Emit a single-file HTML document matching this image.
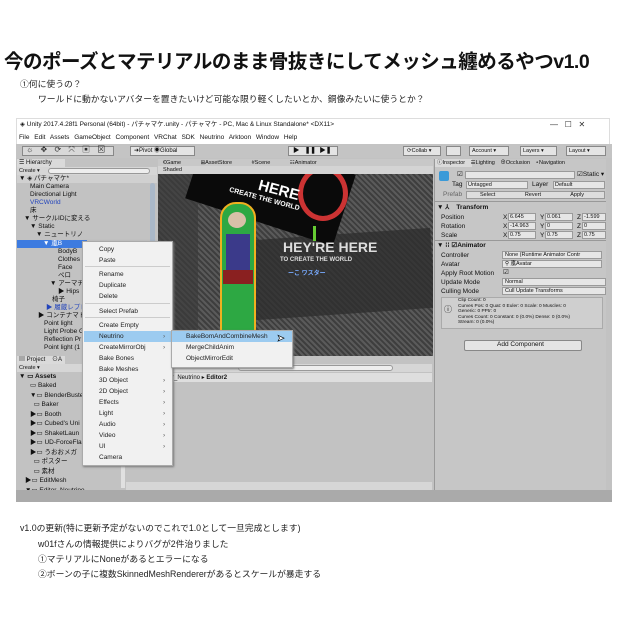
<!DOCTYPE html>
<html><head><meta charset="utf-8"><style>
*{margin:0;padding:0;box-sizing:border-box}
body{width:620px;height:620px;background:#fff;position:relative;overflow:hidden;font-family:"Liberation Sans","Noto Sans CJK JP",sans-serif;color:#222}
.a{position:absolute;white-space:nowrap}
.s{font-size:6.5px;line-height:8px;color:#111}
.m{font-size:6.5px;line-height:11px;color:#222;position:absolute;left:16px}
.f{position:absolute;background:#e6e6e6;border:1px solid #9a9a9a;height:8px}
</style></head><body>
<div class="a" style="left:4px;top:45px;font-size:19.5px;font-weight:bold;letter-spacing:-0.5px;color:#111">今のポーズとマテリアルのまま骨抜きにしてメッシュ纏めるやつv1.0</div>
<div class="a" style="left:20px;top:77px;font-size:8.8px">①何に使うの？</div>
<div class="a" style="left:38px;top:92px;font-size:8.8px">ワールドに動かないアバターを置きたいけど可能な限り軽くしたいとか、銅像みたいに使うとか？</div>

<!-- window -->
<div class="a" style="left:16px;top:118px;width:594px;height:384px;background:#fff;border:1px solid #ddd"></div>
<div class="a s" style="left:20px;top:121px">◈ Unity 2017.4.28f1 Personal (64bit) - パチャマケ.unity - パチャマケ - PC, Mac &amp; Linux Standalone* &lt;DX11&gt;</div>
<div class="a" style="left:550px;top:120px;font-size:8px;color:#333">—&nbsp;&nbsp;&nbsp;☐&nbsp;&nbsp;&nbsp;✕</div>
<div class="a s" style="left:19px;top:134px;word-spacing:3px">File Edit Assets GameObject Component VRChat SDK Neutrino Arktoon Window Help</div>
<!-- toolbar -->
<div class="a" style="left:16px;top:144px;width:596px;height:14px;background:#c4c4c4"></div>
<div class="a" style="left:22px;top:146px;width:92px;height:10px;background:#d8d8d8;border:1px solid #888"></div>
<div class="a s" style="left:26px;top:146px;font-size:8px;word-spacing:5px;color:#333">☼ ✥ ⟳ ⤧ ▣ ⊠</div>
<div class="a" style="left:130px;top:146px;width:65px;height:10px;background:#e4e4e4;border:1px solid #888"></div>
<div class="a s" style="left:134px;top:147px;font-size:6px">➜Pivot ◉Global</div>
<div class="a" style="left:288px;top:146px;width:50px;height:10px;background:#e4e4e4;border:1px solid #888"></div>
<div class="a s" style="left:293px;top:147px;font-size:6.5px;font-weight:bold">▶ &nbsp; ❚❚ &nbsp;▶❚</div>
<div class="a" style="left:403px;top:146px;width:38px;height:10px;background:#e4e4e4;border:1px solid #888"></div>
<div class="a" style="left:446px;top:146px;width:15px;height:10px;background:#e4e4e4;border:1px solid #888"></div>
<div class="a" style="left:469px;top:146px;width:40px;height:10px;background:#e4e4e4;border:1px solid #888"></div>
<div class="a" style="left:520px;top:146px;width:37px;height:10px;background:#e4e4e4;border:1px solid #888"></div>
<div class="a" style="left:566px;top:146px;width:40px;height:10px;background:#e4e4e4;border:1px solid #888"></div>
<div class="a s" style="left:407px;top:147px;font-size:5.5px">⟳Collab ▾</div>
<div class="a s" style="left:472px;top:147px;font-size:5.5px">Account ▾</div>
<div class="a s" style="left:523px;top:147px;font-size:5.5px">Layers ▾</div>
<div class="a s" style="left:569px;top:147px;font-size:5.5px">Layout ▾</div>

<!-- main gray -->
<div class="a" style="left:16px;top:158px;width:596px;height:344px;background:#c2c2c2"></div>
<!-- hierarchy -->
<div class="a" style="left:17px;top:159px;width:48px;height:8px;background:#dadada"></div>
<div class="a s" style="left:19px;top:159px;font-size:6px">☰ Hierarchy</div>
<div class="a" style="left:17px;top:167px;width:140px;height:8px;background:#d6d6d6"></div>
<div class="a s" style="left:19px;top:167px;font-size:5.5px">Create ▾</div>
<div class="a" style="left:48px;top:168px;width:102px;height:6px;background:#eee;border-radius:3px;border:1px solid #999"></div>
<div class="a" style="left:17px;top:175px;width:140px;height:8px;background:#d0d0d0"></div>
<div class="a s" style="left:19px;top:175px">▼ ◈ パチャマケ*</div>
<div class="a" style="left:150px;top:183px;width:5px;height:130px;background:#aab8c8;border-radius:3px"></div>
<div class="a s" style="left:30px;top:183px;line-height:8px">Main Camera<br>Directional Light<br><span style="color:#2244bb">VRCWorld</span><br>床</div>
<div class="a s" style="left:24px;top:215px">▼ サークルIDに変える</div>
<div class="a s" style="left:30px;top:223px">▼ Static</div>
<div class="a s" style="left:36px;top:231px">▼ ニュートリノ</div>
<div class="a" style="left:17px;top:240px;width:70px;height:8px;background:#3d7be0"></div>
<div class="a s" style="left:43px;top:240px;color:#fff">▼ 颪B</div>
<div class="a s" style="left:58px;top:248px;line-height:8px">BodyB<br>Clothes<br>Face<br>ペロ</div>
<div class="a s" style="left:50px;top:280px">▼ アーマチ</div>
<div class="a s" style="left:58px;top:288px">▶ Hips</div>
<div class="a s" style="left:52px;top:296px">椅子</div>
<div class="a s" style="left:46px;top:304px;color:#2244bb">▶ 履蔵レプレ</div>
<div class="a s" style="left:38px;top:312px">▶ コンテナマト</div>
<div class="a s" style="left:44px;top:320px;line-height:8px">Point light<br>Light Probe G<br>Reflection Pr<br>Point light (1</div>

<!-- project -->
<div class="a" style="left:17px;top:356px;width:48px;height:8px;background:#dadada"></div>
<div class="a s" style="left:19px;top:356px;font-size:6px">▤ Project &nbsp;&nbsp; ⊙A</div>
<div class="a" style="left:17px;top:364px;width:415px;height:8px;background:#d6d6d6"></div>
<div class="a s" style="left:19px;top:364px;font-size:5.5px">Create ▾</div>
<div class="a" style="left:238px;top:365px;width:155px;height:6px;background:#eee;border-radius:3px;border:1px solid #999"></div>
<div class="a s" style="left:19px;top:373px;font-weight:bold">▼ ▭ Assets</div>
<div class="a s" style="left:30px;top:381px;line-height:9.5px">▭ Baked<br>▼▭ BlenderBuster<br>&nbsp;&nbsp;▭ Baker<br>▶▭ Booth<br>▶▭ Cubed's Uni<br>▶▭ ShaketLaun<br>▶▭ UD-ForceFla<br>▶▭ うおおメガ<br>&nbsp;&nbsp;▭ ポスター<br>&nbsp;&nbsp;▭ 素材</div>
<div class="a s" style="left:25px;top:476px;line-height:9.5px">▶▭ EditMesh<br>▼▭ Editor_Neutrino<br>&nbsp;&nbsp;&nbsp;&nbsp;▭ Editor</div>
<div class="a" style="left:121px;top:373px;width:4px;height:115px;background:#e0e0e0"></div>
<div class="a" style="left:126px;top:373px;width:306px;height:9px;background:#dedede"></div>
<div class="a s" style="left:172px;top:374px;font-size:6px">r_Neutrino ▸ <b>Editor2</b></div>
<div class="a" style="left:126px;top:482px;width:306px;height:8px;background:#d6d6d6"></div>
<div class="a" style="left:16px;top:490px;width:596px;height:12px;background:#aaa"></div>

<!-- scene -->
<div class="a" style="left:158px;top:159px;width:275px;height:7px;background:#c8c8c8"></div>
<div class="a s" style="left:163px;top:159px;font-size:5.5px;word-spacing:18px">€Game ⊞AssetStore #Scene ☷Animator</div>
<div class="a" style="left:158px;top:166px;width:275px;height:8px;background:#d4d4d4"></div>
<div class="a s" style="left:163px;top:166px;font-size:5.5px">Shaded</div>
<div class="a" style="left:158px;top:174px;width:275px;height:182px;background:#474747;overflow:hidden">
  <div class="a" style="left:0;top:0;width:275px;height:182px;background:repeating-linear-gradient(45deg,#3e3e3e 0 2px,#5a5a5a 2px 4px)"></div>
  <div class="a" style="left:0;top:0;width:40px;height:182px;background:#3a3a3a;opacity:.7"></div>
  <div class="a" style="left:95px;top:60px;width:180px;height:80px;background:#2e2e2e;opacity:.8;transform:rotate(-4deg)"></div>
  <div class="a" style="left:35px;top:-25px;width:155px;height:75px;background:#0a0a0a;transform:rotate(18deg)"></div>
  <div class="a" style="left:140px;top:-8px;width:50px;height:55px;border-radius:50%;border:5px solid #c33;"></div>
  <div class="a" style="left:100px;top:8px;color:#fff;font-weight:bold;font-size:15px;transform:rotate(15deg)">HERE</div>
  <div class="a" style="left:70px;top:22px;color:#fff;font-weight:bold;font-size:7px;transform:rotate(15deg)">CREATE THE WORLD</div>
  <div class="a" style="left:125px;top:65px;color:#ddd;font-weight:bold;font-size:14px">HEY'RE HERE</div>
  <div class="a" style="left:122px;top:83px;color:#ddd;font-weight:bold;font-size:6px">TO CREATE THE WORLD</div>
  <div class="a" style="left:130px;top:94px;color:#7af;font-weight:bold;font-size:6px">ーこ ワスター</div>
  <div class="a" style="left:62px;top:28px;width:36px;height:154px;border-radius:16px 16px 4px 4px;background:#2da843;border:2px solid #f0b020"></div>
  <div class="a" style="left:68px;top:60px;width:24px;height:40px;background:#3b3a8a"></div>
  <div class="a" style="left:65px;top:96px;width:30px;height:14px;background:#8a2020"></div>
  <div class="a" style="left:70px;top:38px;width:18px;height:16px;background:#d8c0a8;border-radius:50%"></div>
  <div class="a" style="left:155px;top:52px;width:3px;height:15px;background:#6c3"></div>
</div>

<!-- inspector -->
<div class="a" style="left:434px;top:159px;width:172px;height:331px;background:#c6c6c6;border-left:1px solid #999"></div>
<div class="a" style="left:435px;top:159px;width:37px;height:8px;background:#dadada"></div>
<div class="a s" style="left:437px;top:159px;font-size:5.5px;word-spacing:4px">ⓘInspector ☰Lighting ⊕Occlusion ∘Navigation</div>
<div class="a" style="left:439px;top:171px;width:10px;height:10px;background:#3a9ad8;border-radius:2px"></div>
<div class="a s" style="left:457px;top:171px">☑ 颪B</div>
<div class="f" style="left:465px;top:171px;width:110px"></div>
<div class="a s" style="left:577px;top:171px">☑Static ▾</div>
<div class="a s" style="left:452px;top:181px">Tag</div><div class="f" style="left:466px;top:181px;width:62px"></div>
<div class="a s" style="left:532px;top:181px">Layer</div><div class="f" style="left:553px;top:181px;width:52px"></div>
<div class="a s" style="left:468px;top:181px;font-size:5.5px">Untagged</div><div class="a s" style="left:555px;top:181px;font-size:5.5px">Default</div>
<div class="a s" style="left:443px;top:191px;color:#666">Prefab</div>
<div class="f" style="left:466px;top:191px;width:139px;background:#ddd"></div>
<div class="a s" style="left:480px;top:191px;font-size:5.5px;word-spacing:28px">Select Revert Apply</div>
<div class="a" style="left:434px;top:201px;width:172px;height:1px;background:#999"></div>
<div class="a s" style="left:437px;top:204px;font-weight:bold">▼ ⅄ &nbsp;&nbsp; Transform</div>
<div class="a s" style="left:441px;top:213px;line-height:9px">Position<br>Rotation<br>Scale</div>
<div class="a s" style="left:503px;top:213px;line-height:9px">X<br>X<br>X</div>
<div class="a s" style="left:540px;top:213px;line-height:9px">Y<br>Y<br>Y</div>
<div class="a s" style="left:577px;top:213px;line-height:9px">Z<br>Z<br>Z</div>
<div class="f" style="left:508px;top:213px;width:28px"></div><div class="f" style="left:545px;top:213px;width:28px"></div><div class="f" style="left:582px;top:213px;width:24px"></div>
<div class="f" style="left:508px;top:222px;width:28px"></div><div class="f" style="left:545px;top:222px;width:28px"></div><div class="f" style="left:582px;top:222px;width:24px"></div>
<div class="f" style="left:508px;top:231px;width:28px"></div><div class="f" style="left:545px;top:231px;width:28px"></div><div class="f" style="left:582px;top:231px;width:24px"></div>
<div class="a s" style="left:510px;top:213px;line-height:9px;font-size:5.5px">6.645<br>-14.963<br>0.75</div>
<div class="a s" style="left:547px;top:213px;line-height:9px;font-size:5.5px">0.061<br>0<br>0.75</div>
<div class="a s" style="left:584px;top:213px;line-height:9px;font-size:5.5px">-1.599<br>0<br>0.75</div>
<div class="a" style="left:434px;top:240px;width:172px;height:1px;background:#999"></div>
<div class="a s" style="left:437px;top:242px;font-weight:bold">▼ ⁞⁞ ☑Animator</div>
<div class="a s" style="left:441px;top:251px;line-height:9px">Controller<br>Avatar<br>Apply Root Motion<br>Update Mode<br>Culling Mode</div>
<div class="f" style="left:502px;top:251px;width:100px"></div>
<div class="f" style="left:502px;top:260px;width:100px"></div>
<div class="a s" style="left:503px;top:269px">☑</div>
<div class="f" style="left:502px;top:278px;width:104px"></div>
<div class="f" style="left:502px;top:287px;width:104px"></div>
<div class="a s" style="left:505px;top:251px;line-height:9px;font-size:5.5px">None (Runtime Animator Contr<br>⚲ 颪Avatar</div>
<div class="a s" style="left:505px;top:278px;line-height:9px;font-size:5.5px">Normal<br>Cull Update Transforms</div>
<div class="a" style="left:441px;top:297px;width:162px;height:32px;background:#cfcfcf;border:1px solid #aaa"></div>
<div class="a s" style="left:458px;top:298px;font-size:4.8px;line-height:5.5px">Clip Count: 0<br>Curves Pos: 0 Quat: 0 Euler: 0 Scale: 0 Muscles: 0<br>Generic: 0 PPtr: 0<br>Curves Count: 0 Constant: 0 (0.0%) Dense: 0 (0.0%)<br>Stream: 0 (0.0%)</div>
<div class="a s" style="left:444px;top:306px;font-size:8px">ⓘ</div>
<div class="a" style="left:464px;top:340px;width:118px;height:11px;background:#e4e4e4;border:1px solid #888;border-radius:2px"></div>
<div class="a s" style="left:497px;top:341px;font-size:6.5px">Add Component</div>

<!-- context menu -->
<div class="a" style="left:82px;top:241px;width:91px;height:225px;background:#f1f1f1;border:1px solid #aaa;box-shadow:1px 1px 2px #777"></div>
<div class="a" style="left:84px;top:331px;width:87px;height:11px;background:#9ccbf0"></div>
<div class="m" style="left:99px;top:244px">Copy</div>
<div class="m" style="left:99px;top:255px">Paste</div>
<div class="m" style="left:99px;top:269px">Rename</div>
<div class="m" style="left:99px;top:280px">Duplicate</div>
<div class="m" style="left:99px;top:291px">Delete</div>
<div class="m" style="left:99px;top:306px">Select Prefab</div>
<div class="m" style="left:99px;top:320px">Create Empty</div>
<div class="m" style="left:99px;top:331px">Neutrino</div>
<div class="m" style="left:99px;top:342px">CreateMirrorObj</div>
<div class="m" style="left:99px;top:353px">Bake Bones</div>
<div class="m" style="left:99px;top:364px">Bake Meshes</div>
<div class="m" style="left:99px;top:375px">3D Object</div>
<div class="m" style="left:99px;top:386px">2D Object</div>
<div class="m" style="left:99px;top:397px">Effects</div>
<div class="m" style="left:99px;top:408px">Light</div>
<div class="m" style="left:99px;top:419px">Audio</div>
<div class="m" style="left:99px;top:430px">Video</div>
<div class="m" style="left:99px;top:441px">UI</div>
<div class="m" style="left:99px;top:452px">Camera</div>
<div class="a s" style="left:163px;top:331px;line-height:11px;color:#555">›<br>›<br><br><br>›<br>›<br>›<br>›<br>›<br>›<br>›</div>
<div class="a" style="left:85px;top:266px;width:85px;height:1px;background:#ccc"></div>
<div class="a" style="left:85px;top:303px;width:85px;height:1px;background:#ccc"></div>
<div class="a" style="left:85px;top:317px;width:85px;height:1px;background:#ccc"></div>
<!-- submenu -->
<div class="a" style="left:171px;top:330px;width:122px;height:38px;background:#f1f1f1;border:1px solid #aaa;box-shadow:1px 1px 2px #777"></div>
<div class="a" style="left:172px;top:331px;width:120px;height:11px;background:#9ccbf0"></div>
<div class="m" style="left:186px;top:331px">BakeBomAndCombineMesh</div>
<div class="m" style="left:186px;top:342px">MergeChildAnim</div>
<div class="m" style="left:186px;top:353px">ObjectMirrorEdit</div>
<div class="a" style="left:277px;top:333px;font-size:9px;color:#fff;-webkit-text-stroke:0.6px #000">➤</div>

<div class="a" style="left:20px;top:521px;font-size:8.8px">v1.0の更新(特に更新予定がないのでこれで1.0として一旦完成とします)</div>
<div class="a" style="left:38px;top:537px;font-size:8.8px">w01fさんの情報提供によりバグが2件治りました</div>
<div class="a" style="left:38px;top:552px;font-size:8.8px">①マテリアルにNoneがあるとエラーになる</div>
<div class="a" style="left:38px;top:567px;font-size:8.8px">②ボーンの子に複数SkinnedMeshRendererがあるとスケールが暴走する</div>
</body></html>
